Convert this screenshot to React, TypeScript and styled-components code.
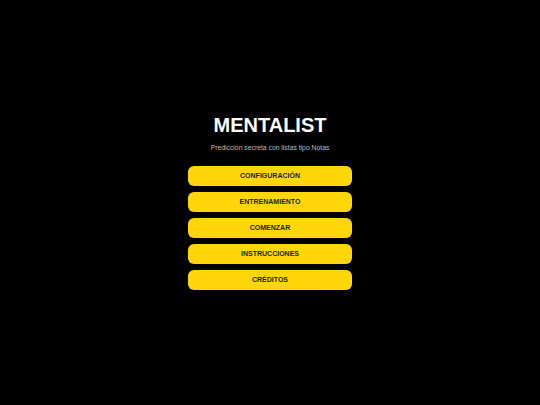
import React from 'react';
import styled, { createGlobalStyle } from 'styled-components';

const GlobalStyle = createGlobalStyle`
  html, body {
    margin: 0;
    padding: 0;
    background: #000;
  }
  body {
    font-family: 'Liberation Sans', Arial, sans-serif;
  }
`;

const Screen = styled.div`
  width: 100vw;
  height: 100vh;
  background: #000;
  display: flex;
  align-items: center;
  justify-content: center;
`;

const Menu = styled.div`
  display: flex;
  flex-direction: column;
  align-items: center;
  width: 164px;
  margin-top: -1px;
`;

const Title = styled.h1`
  margin: 0;
  color: #fff;
  font-size: 20px;
  font-weight: 700;
  line-height: 20px;
`;

const Subtitle = styled.p`
  margin: 9px 0 14px;
  color: #bdbdbd;
  font-size: 6.8px;
  line-height: 8px;
`;

const Buttons = styled.div`
  display: flex;
  flex-direction: column;
  gap: 6px;
  width: 100%;
`;

const MenuButton = styled.button`
  height: 20px;
  width: 100%;
  border: none;
  border-radius: 6px;
  background: #ffd60a;
  color: #1e1e1e;
  font-family: 'Liberation Sans', Arial, sans-serif;
  font-size: 7px;
  font-weight: 700;
  padding: 0;
  cursor: pointer;
`;

const items = ['CONFIGURACIÓN', 'ENTRENAMIENTO', 'COMENZAR', 'INSTRUCCIONES', 'CRÉDITOS'];

export default function App(): JSX.Element {
  return (
    <>
      <GlobalStyle />
      <Screen>
        <Menu>
          <Title>MENTALIST</Title>
          <Subtitle>Predicción secreta con listas tipo Notas</Subtitle>
          <Buttons>
            {items.map((label) => (
              <MenuButton key={label}>{label}</MenuButton>
            ))}
          </Buttons>
        </Menu>
      </Screen>
    </>
  );
}
